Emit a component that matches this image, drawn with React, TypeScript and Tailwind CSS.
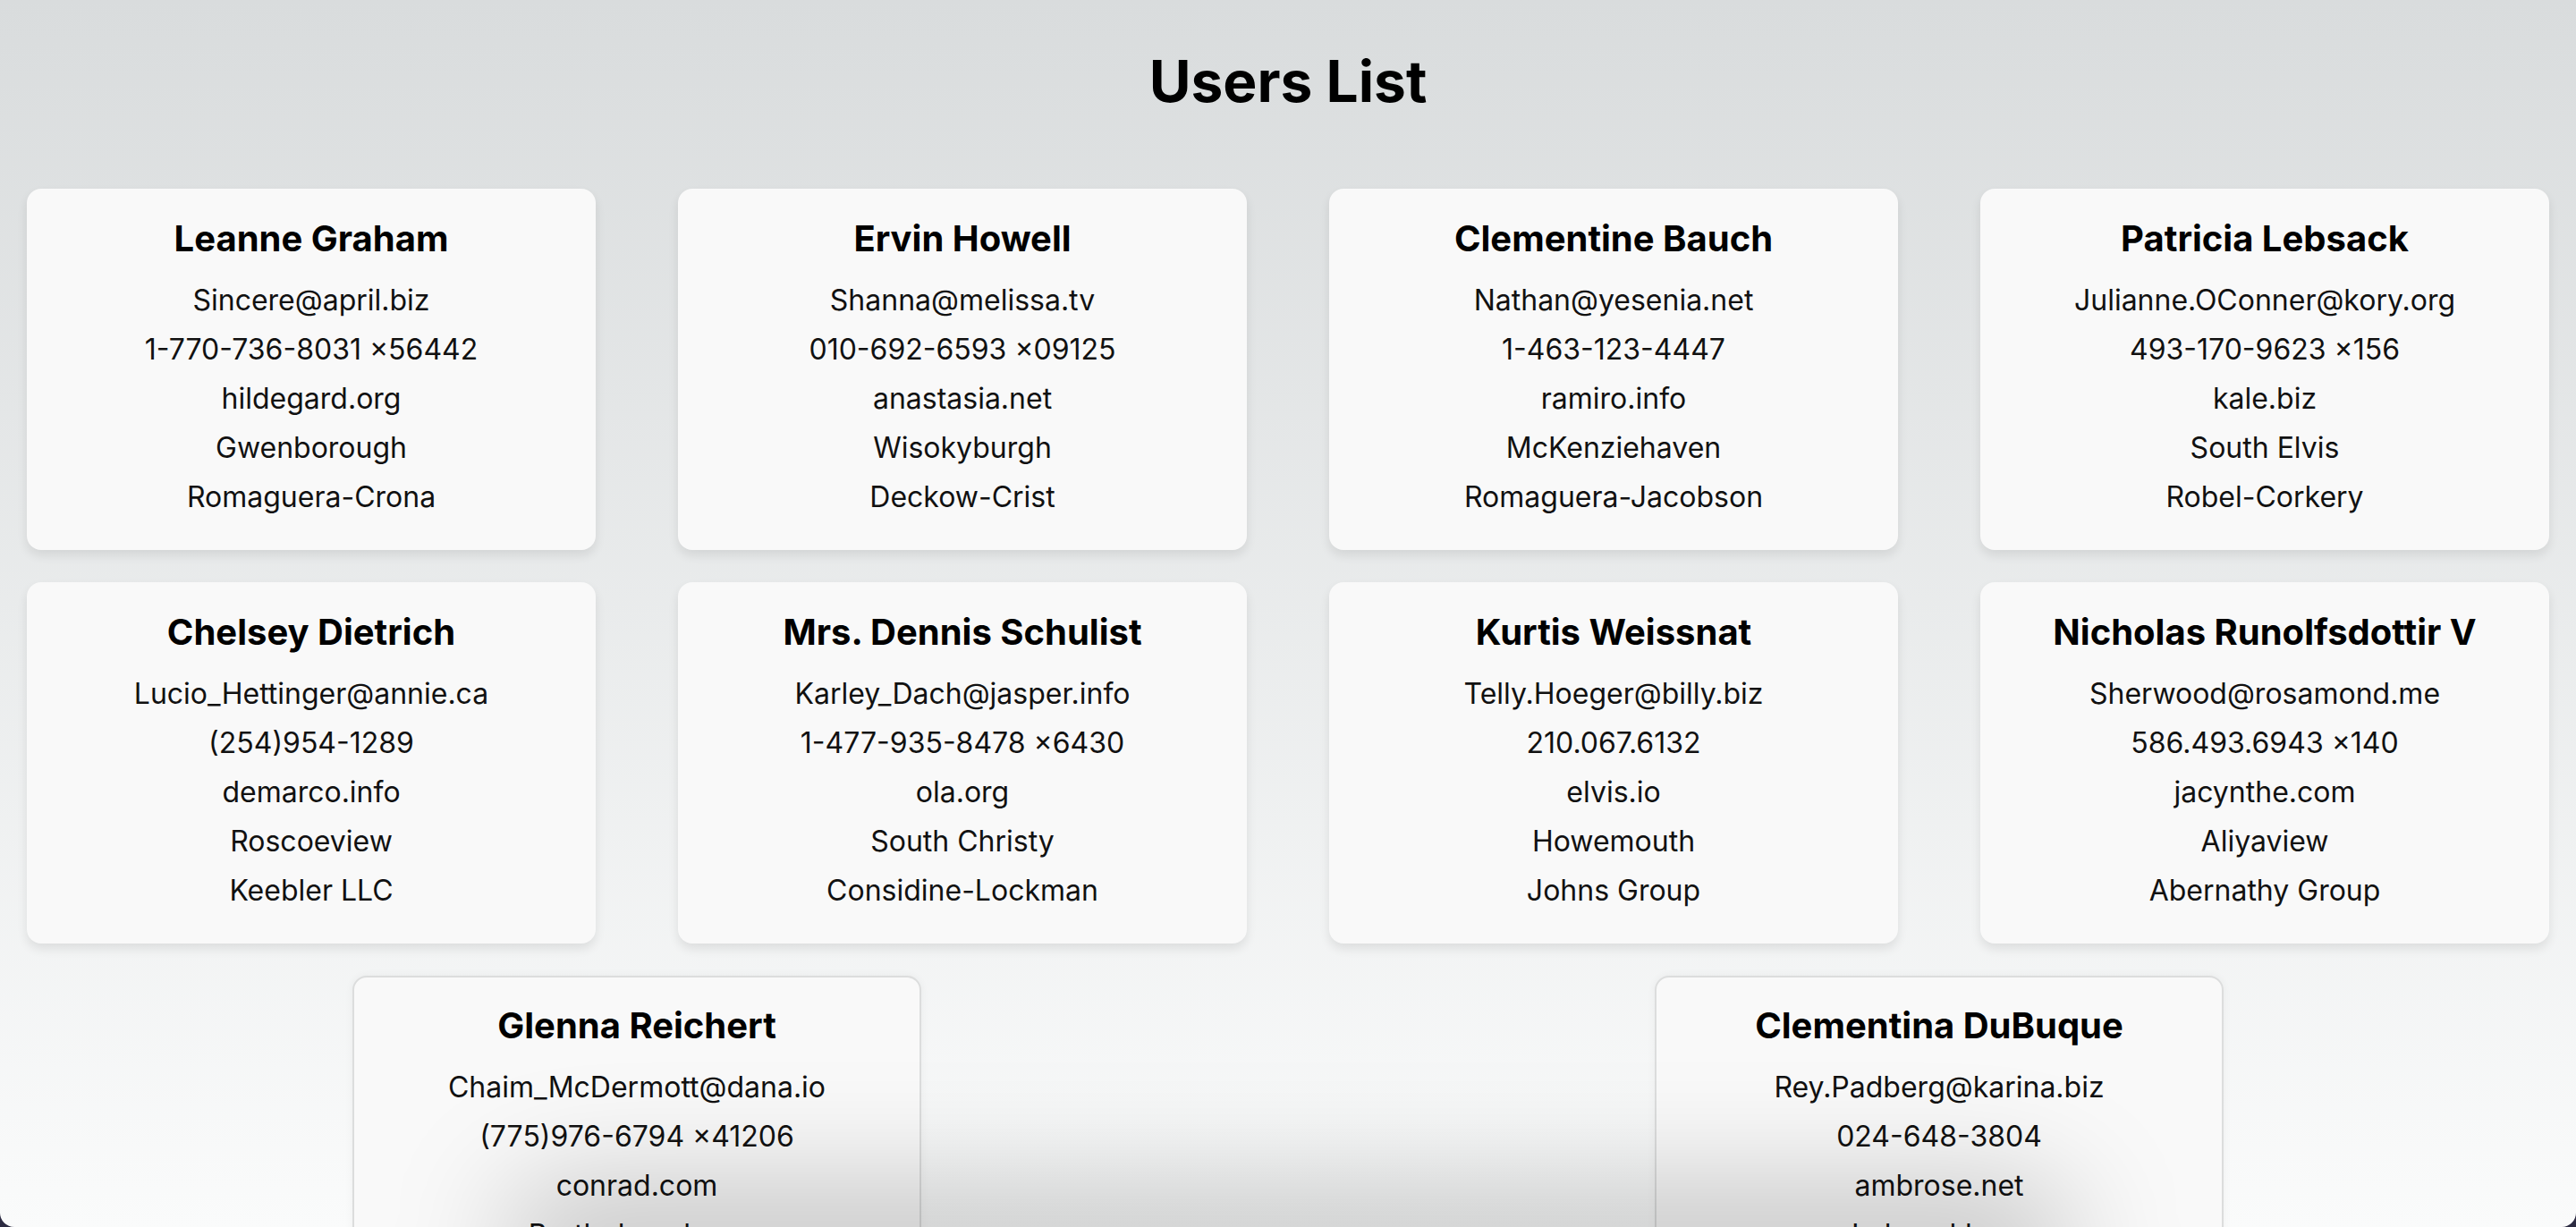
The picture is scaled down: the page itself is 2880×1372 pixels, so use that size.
import React from "react";

type User = {
    name: string;
    email: string;
    phone: string;
    website: string;
    city: string;
    company: string;
};

const users: User[] = [
    {name: "Leanne Graham", email: "Sincere@april.biz", phone: "1-770-736-8031 x56442", website: "hildegard.org", city: "Gwenborough", company: "Romaguera-Crona"},
    {name: "Ervin Howell", email: "Shanna@melissa.tv", phone: "010-692-6593 x09125", website: "anastasia.net", city: "Wisokyburgh", company: "Deckow-Crist"},
    {name: "Clementine Bauch", email: "Nathan@yesenia.net", phone: "1-463-123-4447", website: "ramiro.info", city: "McKenziehaven", company: "Romaguera-Jacobson"},
    {name: "Patricia Lebsack", email: "Julianne.OConner@kory.org", phone: "493-170-9623 x156", website: "kale.biz", city: "South Elvis", company: "Robel-Corkery"},
    {name: "Chelsey Dietrich", email: "Lucio_Hettinger@annie.ca", phone: "(254)954-1289", website: "demarco.info", city: "Roscoeview", company: "Keebler LLC"},
    {name: "Mrs. Dennis Schulist", email: "Karley_Dach@jasper.info", phone: "1-477-935-8478 x6430", website: "ola.org", city: "South Christy", company: "Considine-Lockman"},
    {name: "Kurtis Weissnat", email: "Telly.Hoeger@billy.biz", phone: "210.067.6132", website: "elvis.io", city: "Howemouth", company: "Johns Group"},
    {name: "Nicholas Runolfsdottir V", email: "Sherwood@rosamond.me", phone: "586.493.6943 x140", website: "jacynthe.com", city: "Aliyaview", company: "Abernathy Group"},
    {name: "Glenna Reichert", email: "Chaim_McDermott@dana.io", phone: "(775)976-6794 x41206", website: "conrad.com", city: "Bartholomebury", company: "Yost and Sons"},
    {name: "Clementina DuBuque", email: "Rey.Padberg@karina.biz", phone: "024-648-3804", website: "ambrose.net", city: "Lebsackbury", company: "Hoeger LLC"},
];

const UserCard = ({user, last}: { user: User; last: boolean }) => {
    return (
        <div
            className={
                last
                    ? "w-[636px] shrink-0 rounded-2xl bg-[#f9f9f9] pt-[28px] pb-8 text-center border-2 border-[#dcdddd] shadow-[0_0_10px_rgba(0,0,0,0.05)]"
                    : "w-[636px] shrink-0 rounded-2xl bg-[#f9f9f9] pt-[30px] pb-8 text-center shadow-[0_6px_12px_rgba(0,0,0,0.09)]"
            }
        >
            <h2 className="text-[40px] leading-[52px] font-bold mb-[15px] text-black">{user.name}</h2>
            <p className="text-[32px] leading-[55px] text-[#111]">{user.email}</p>
            <p className="text-[32px] leading-[55px] text-[#111]">{user.phone}</p>
            <p className="text-[32px] leading-[55px] text-[#111]">{user.website}</p>
            <p className="text-[32px] leading-[55px] text-[#111]">{user.city}</p>
            <p className="text-[32px] leading-[55px] text-[#111]">{user.company}</p>
        </div>
    );
};

export default function App() {
    return (
        <div className="bg-[#2c2b42] w-[2880px] h-[1372px]">
            <div className="relative h-[1372px] overflow-hidden rounded-b-[16px] bg-gradient-to-b from-[#d9dcdd] to-[#fafbfb] font-['Inter',sans-serif]">
                <h1 className="pt-[59px] mb-[88px] text-center text-[64px] leading-[64px] font-bold text-black">
                    Users List
                </h1>
                <div className="flex flex-wrap justify-around gap-x-8 gap-y-9">
                    {users.map((u, i) => (
                        <UserCard key={u.name} user={u} last={i >= 8}/>
                    ))}
                </div>
                <div className="absolute left-[560px] right-[560px] bottom-[-90px] h-[140px] rounded-full bg-black/20 blur-3xl"/>
            </div>
        </div>
    );
}
